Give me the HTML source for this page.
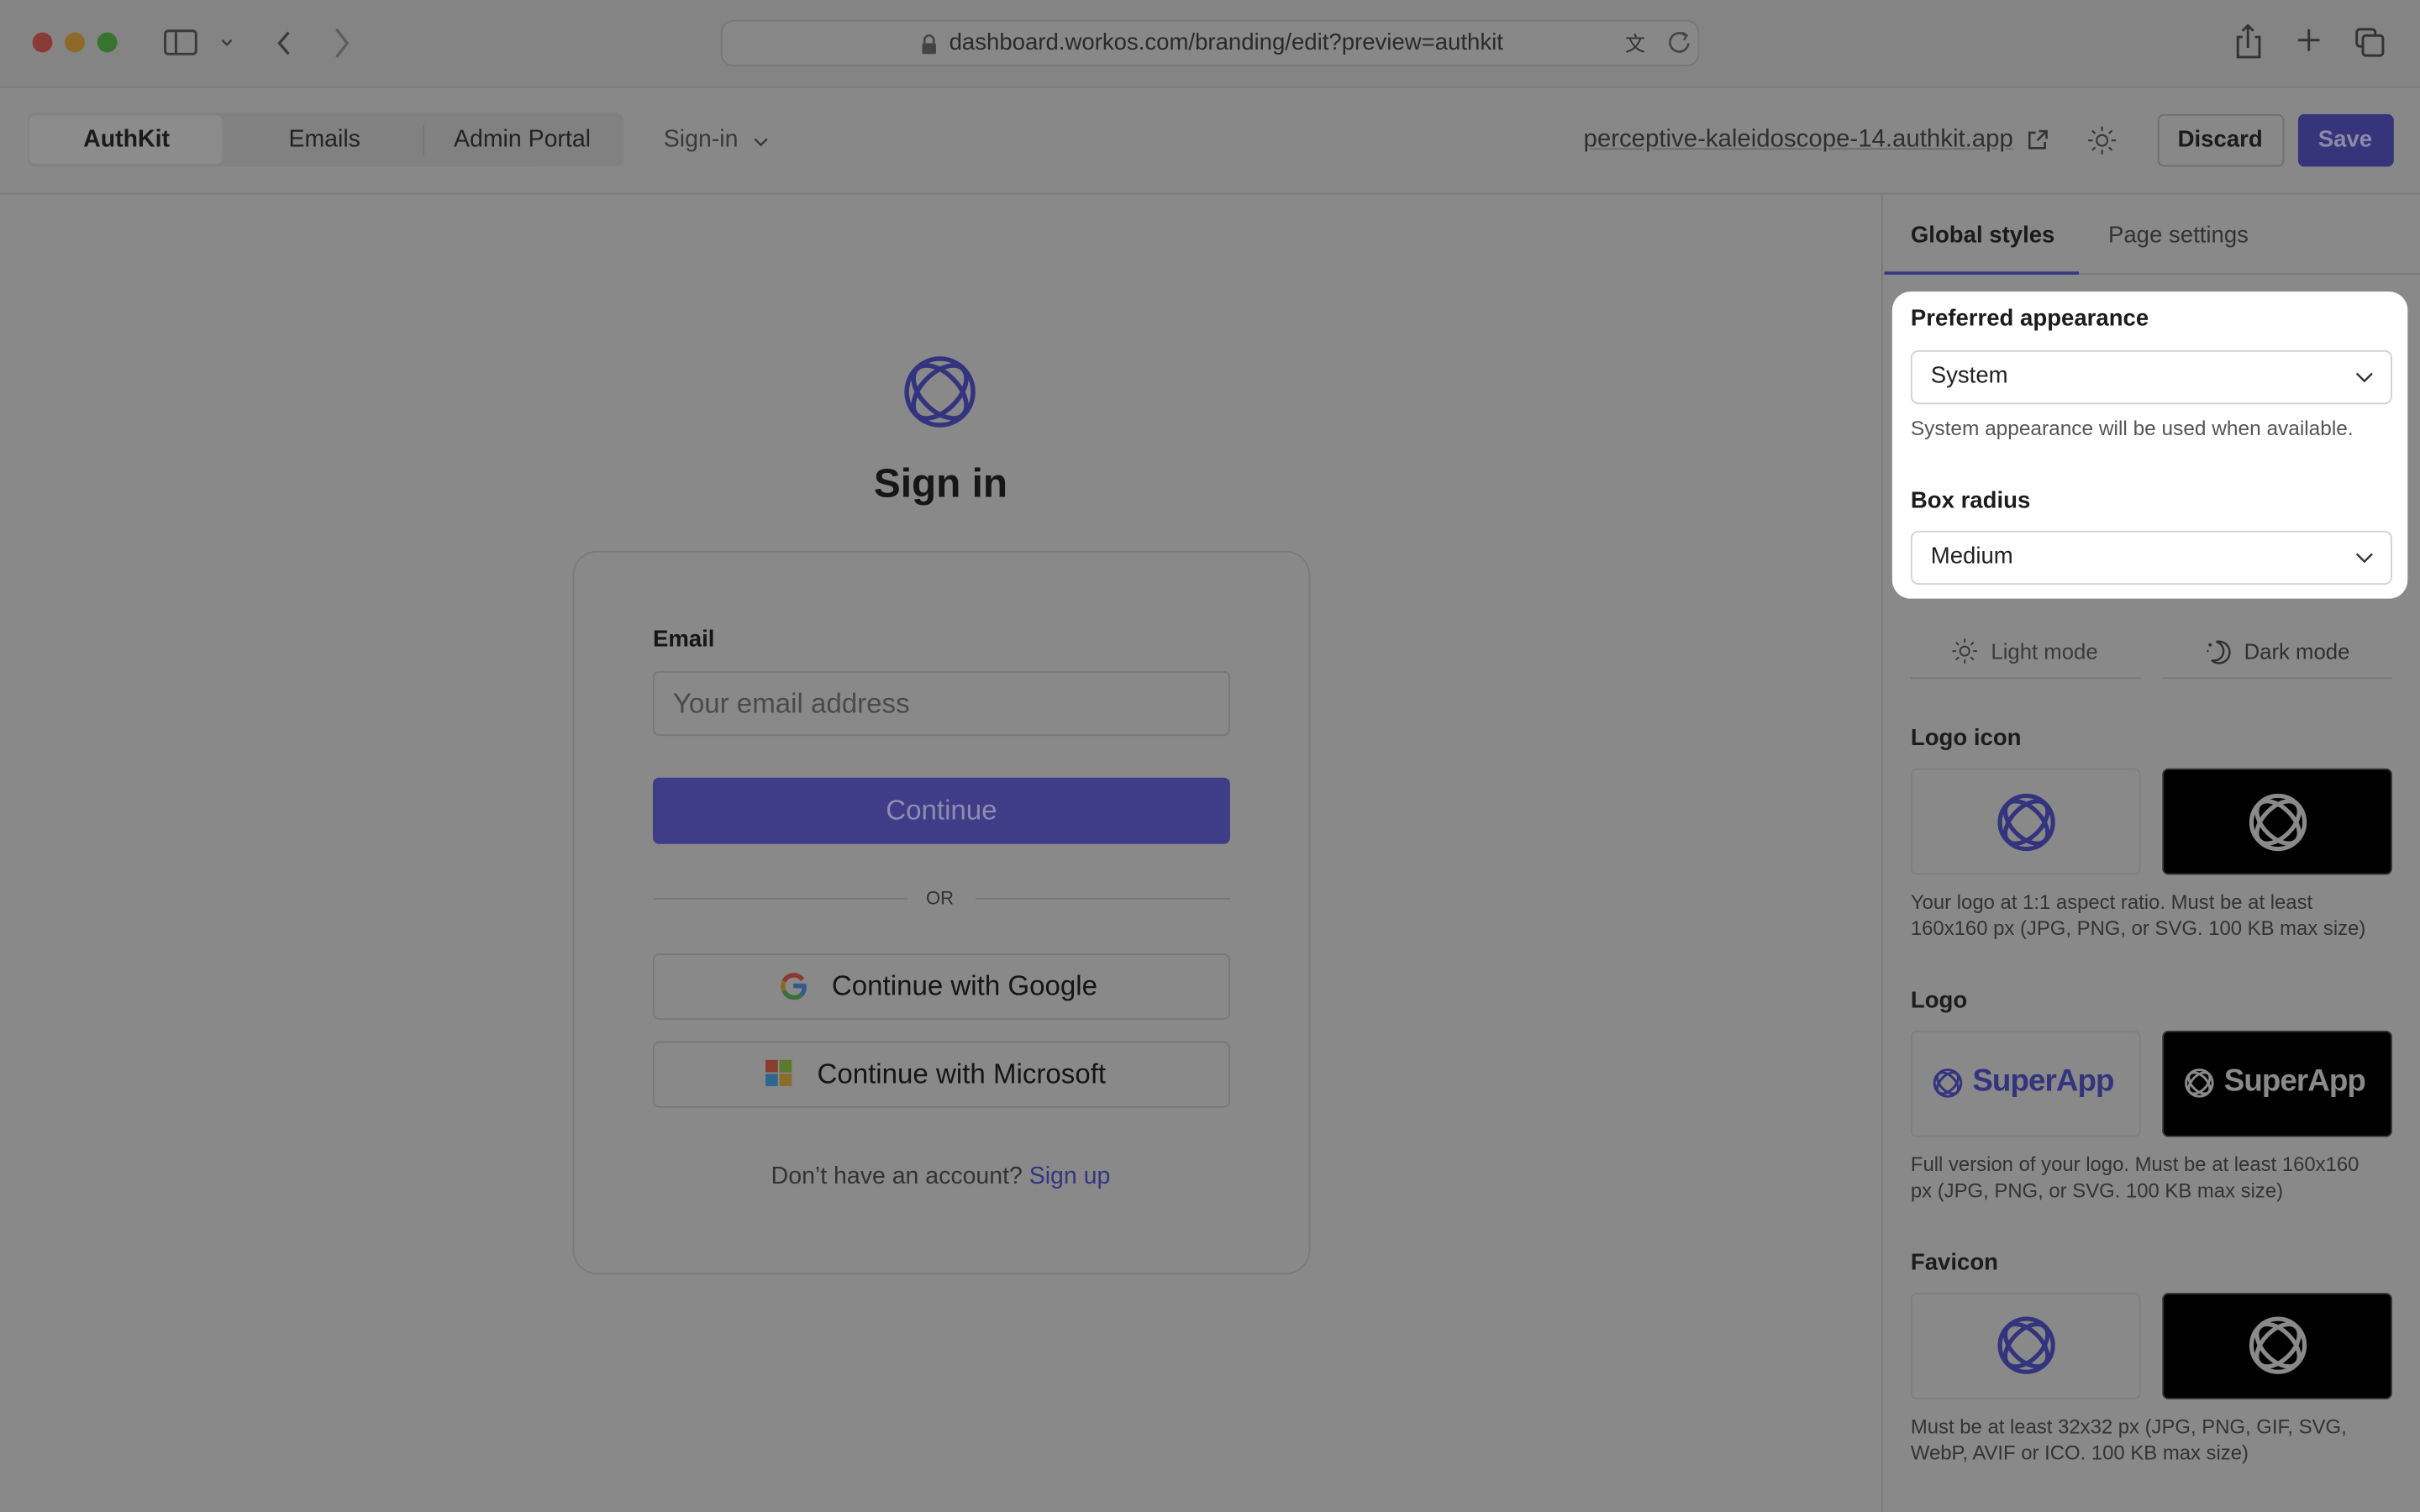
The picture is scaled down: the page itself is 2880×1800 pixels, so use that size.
<!DOCTYPE html>
<html><head><meta charset="utf-8"><style>
*{box-sizing:border-box;margin:0;padding:0}
html,body{width:2880px;height:1800px;overflow:hidden;background:#898989}
#w{position:absolute;left:0;top:0;width:1568px;height:980px;transform:scale(1.836735);transform-origin:0 0;font-family:"Liberation Sans",sans-serif;color:#1d1d1f;background:#898989}
.a{position:absolute}
.t{position:absolute;white-space:nowrap}
.sel{position:absolute;background:#fff;border:1px solid #d0d0d6;border-radius:5px;height:35px;width:312px;left:1238px}
.box{position:absolute;width:149px;height:69px;border-radius:4px}
.lb{border:1px solid #7e7e7e}
.dk{background:#000;border:1px solid #333}
.cap{position:absolute;left:1238px;font-size:13px;color:#333;line-height:17px}
.h{position:absolute;left:1238px;font-size:15px;font-weight:bold;color:#1c1c1c}
.btn{position:absolute;left:423px;width:374px;height:43px;border:1px solid #777;border-radius:4px;font-size:18px;text-align:center;line-height:41px;color:#151515}
</style></head><body><div id="w">
<div class="a" style="left:0;top:0;width:1568px;height:57px;background:#848484;border-bottom:1px solid #797979"></div>
<div class="a" style="left:21px;top:21px;width:13px;height:13px;border-radius:50%;background:#8a3a34"></div>
<div class="a" style="left:42px;top:21px;width:13px;height:13px;border-radius:50%;background:#8d6a2a"></div>
<div class="a" style="left:63px;top:21px;width:13px;height:13px;border-radius:50%;background:#37742f"></div>
<svg class="a" style="left:100px;top:14px" width="110" height="28" viewBox="0 0 110 28" fill="none" stroke="#3a3a3a" stroke-width="1.6"><rect x="7" y="6" width="20" height="15" rx="2"/><path d="M14 6v15"/><path d="M44 12l3 3 3-3" stroke-width="1.3"/><path d="M87 7l-6 7 6 7" stroke-width="1.8"/></svg>
<svg class="a" style="left:214px;top:16px" width="16" height="24"><path d="M4 3l7 9-7 9" fill="none" stroke="#5e5e5e" stroke-width="1.8"/></svg>
<div class="a" style="left:467px;top:13px;width:634px;height:30px;border:1px solid #767676;border-radius:8px;background:#888"></div>
<svg class="a" style="left:596px;top:21px" width="12" height="15"><path d="M3 7V5a3 3 0 016 0v2" fill="none" stroke="#444" stroke-width="1.4"/><rect x="1.5" y="7" width="9" height="7" rx="1" fill="#444"/></svg>
<div class="t" style="left:615px;top:19px;font-size:15px;color:#2a2a2a">dashboard.workos.com/branding/edit?preview=authkit</div>
<div class="t" style="left:1053px;top:18px;font-size:13px;color:#333">文</div>
<svg class="a" style="left:1079px;top:19px" width="18" height="18"><path d="M13 4a6 6 0 1 0 2 5" fill="none" stroke="#444" stroke-width="1.4"/><path d="M11 2l3 2-2 3" fill="none" stroke="#444" stroke-width="1.3"/></svg>
<svg class="a" style="left:1445px;top:15px" width="110" height="26" fill="none" stroke="#333" stroke-width="1.6"><path d="M8 9H5v13h14V9h-3M11.5 16V2M8 5l3.5-3.5L15 5"/><path d="M51 4v14M44 11h14"/><rect x="82" y="4" width="12" height="11" rx="2"/><rect x="86" y="8" width="13" height="13" rx="2" fill="#848484"/></svg>
<div class="a" style="left:0;top:57px;width:1568px;height:69px;background:#888;border-bottom:1px solid #7a7a7a"></div>
<div class="a" style="left:18px;top:73px;width:386px;height:35px;background:#818181;border-radius:5px"></div>
<div class="a" style="left:18px;top:74px;width:127px;height:33px;background:#8c8c8c;border-radius:5px;border:1px solid #838383"></div>
<div class="a" style="left:274px;top:81px;width:1px;height:20px;background:#757575"></div>
<div class="t" style="left:54px;top:82px;font-size:15.5px;font-weight:bold;color:#1a1a1a">AuthKit</div>
<div class="t" style="left:187px;top:82px;font-size:15.5px;color:#222">Emails</div>
<div class="t" style="left:294px;top:82px;font-size:15.5px;color:#222">Admin Portal</div>
<div class="t" style="left:430px;top:82px;font-size:15.5px;color:#3a3a3a">Sign-in</div>
<svg class="a" style="left:487px;top:87px" width="12" height="10"><path d="M2 3l4 4 4-4" fill="none" stroke="#3a3a3a" stroke-width="1.3"/></svg>
<div class="t" style="left:1026px;top:82px;font-size:16px;color:#2f2f2f;text-decoration:underline;text-decoration-color:#6a6a6a">perceptive-kaleidoscope-14.authkit.app</div>
<svg class="a" style="left:1312px;top:83px" width="16" height="16" fill="none" stroke="#333" stroke-width="1.4"><path d="M7 3H3v10h10V9M9 2h5v5M14 2L8 8"/></svg>
<svg class="a" style="left:1352px;top:81px" width="20" height="20" fill="none" stroke="#3a3a3a" stroke-width="1.2"><circle cx="10" cy="10" r="3.5"/><path d="M10 1v3M10 16v3M1 10h3M16 10h3M3.6 3.6l2 2M14.4 14.4l2 2M3.6 16.4l2-2M14.4 5.6l2-2"/></svg>
<div class="a" style="left:1398px;top:74px;width:82px;height:34px;border:1px solid #6f6f6f;border-radius:4px"></div>
<div class="t" style="left:1411px;top:82px;font-size:15px;font-weight:bold;color:#1b1b1b">Discard</div>
<div class="a" style="left:1489px;top:74px;width:62px;height:34px;background:#36347a;border-radius:4px"></div>
<div class="t" style="left:1502px;top:82px;font-size:15px;font-weight:bold;color:#8a8aa8">Save</div>
<svg class="a" style="left:584px;top:229px" width="50" height="50" viewBox="0 0 50 50" fill="none" stroke="#34347e" stroke-width="3"><circle cx="25" cy="25" r="21.5"/><ellipse cx="25" cy="25" rx="21" ry="12" transform="rotate(45 25 25)"/><ellipse cx="25" cy="25" rx="21" ry="12" transform="rotate(-45 25 25)"/></svg>
<div class="t" style="left:0;width:1219px;text-align:center;top:298px;font-size:26px;font-weight:bold;color:#161616">Sign in</div>
<div class="a" style="left:371px;top:357px;width:478px;height:469px;border:1px solid #7a7a7a;border-radius:16px"></div>
<div class="t" style="left:423px;top:406px;font-size:15px;font-weight:bold;color:#161616">Email</div>
<div class="a" style="left:423px;top:435px;width:374px;height:42px;border:1px solid #777;border-radius:4px"></div>
<div class="t" style="left:436px;top:446px;font-size:18px;color:#4a4a4a">Your email address</div>
<div class="a" style="left:423px;top:504px;width:374px;height:43px;background:#3f3d88;border-radius:4px"></div>
<div class="t" style="left:423px;width:374px;text-align:center;top:515px;font-size:18px;color:#8d8cb0">Continue</div>
<div class="a" style="left:423px;top:582px;width:165px;height:1px;background:#777"></div>
<div class="a" style="left:632px;top:582px;width:165px;height:1px;background:#777"></div>
<div class="t" style="left:600px;top:575px;font-size:12px;color:#333">OR</div>
<div class="btn" style="top:618px"><span style="display:inline-block;width:30px"></span>Continue with Google</div>
<svg class="a" style="left:505px;top:630px" width="18" height="18" viewBox="0 0 18 18" fill="none" stroke-width="3"><path d="M15 5A7 7 0 0 0 3 6" stroke="#8a3a32"/><path d="M3 6a7 7 0 0 0 0 6" stroke="#8a6a2a"/><path d="M3 12a7 7 0 0 0 11 3" stroke="#3a6f38"/><path d="M9 9h7a7 7 0 0 1-2 6" stroke="#335a8a"/></svg>
<div class="btn" style="top:675px"><span style="display:inline-block;width:26px"></span>Continue with Microsoft</div>
<div class="a" style="left:496px;top:687px;width:8px;height:8px;background:#8c3c2c"></div>
<div class="a" style="left:505px;top:687px;width:8px;height:8px;background:#5a7a2e"></div>
<div class="a" style="left:496px;top:696px;width:8px;height:8px;background:#2e6690"></div>
<div class="a" style="left:505px;top:696px;width:8px;height:8px;background:#8c6c2a"></div>
<div class="t" style="left:0;width:1219px;text-align:center;top:754px;font-size:15.5px;color:#333">Don’t have an account? <span style="color:#36347f">Sign up</span></div>
<div class="a" style="left:1219px;top:126px;width:1px;height:854px;background:#7a7a7a"></div>
<div class="a" style="left:1220px;top:177px;width:348px;height:1px;background:#7a7a7a"></div>
<div class="a" style="left:1221px;top:176px;width:126px;height:2px;background:#3a3880"></div>
<div class="t" style="left:1238px;top:144px;font-size:15px;font-weight:bold;color:#1b1b1b">Global styles</div>
<div class="t" style="left:1366px;top:144px;font-size:15px;color:#333">Page settings</div>
<div class="a" style="left:1226px;top:189px;width:334px;height:199px;background:#fff;border-radius:12px"></div>
<div class="h" style="top:198px">Preferred appearance</div>
<div class="sel" style="top:227px"></div>
<div class="t" style="left:1251px;top:235px;font-size:15px;color:#222">System</div>
<svg class="a" style="left:1525px;top:239px" width="14" height="12"><path d="M2 3l5 5 5-5" fill="none" stroke="#333" stroke-width="1.3"/></svg>
<div class="t" style="left:1238px;top:270px;font-size:13.3px;color:#555">System appearance will be used when available.</div>
<div class="h" style="top:316px">Box radius</div>
<div class="sel" style="top:344px"></div>
<div class="t" style="left:1251px;top:352px;font-size:15px;color:#222">Medium</div>
<svg class="a" style="left:1525px;top:356px" width="14" height="12"><path d="M2 3l5 5 5-5" fill="none" stroke="#333" stroke-width="1.3"/></svg>
<svg class="a" style="left:1264px;top:413px" width="18" height="18" fill="none" stroke="#3a3a3a" stroke-width="1.1"><circle cx="9" cy="9" r="3"/><path d="M9 1v2.5M9 14.5V17M1 9h2.5M14.5 9H17M3.3 3.3l1.8 1.8M12.9 12.9l1.8 1.8M3.3 14.7l1.8-1.8M12.9 5.1l1.8-1.8"/></svg>
<div class="t" style="left:1290px;top:414px;font-size:14px;color:#3a3a3a">Light mode</div>
<svg class="a" style="left:1428px;top:413px" width="18" height="18" fill="none" stroke="#2f2f2f" stroke-width="1.3"><path d="M8 3a7 7 0 1 1-3 12 6 6 0 0 0 3-12z"/><path d="M3 5h2M4 4v2M2 9h1"/></svg>
<div class="t" style="left:1454px;top:414px;font-size:14px;color:#2f2f2f">Dark mode</div>
<div class="a" style="left:1238px;top:439px;width:149px;height:1px;background:#777"></div>
<div class="a" style="left:1401px;top:439px;width:149px;height:1px;background:#777"></div>
<div class="h" style="top:470px">Logo icon</div>
<div class="box lb" style="left:1238px;top:498px"></div>
<div class="box dk" style="left:1401px;top:498px"></div>
<svg class="a" style="left:1293px;top:513px" width="40" height="40" viewBox="0 0 50 50" fill="none" stroke="#34347e" stroke-width="3.5"><circle cx="25" cy="25" r="21.5"/><ellipse cx="25" cy="25" rx="21" ry="12" transform="rotate(45 25 25)"/><ellipse cx="25" cy="25" rx="21" ry="12" transform="rotate(-45 25 25)"/></svg>
<svg class="a" style="left:1456px;top:513px" width="40" height="40" viewBox="0 0 50 50" fill="none" stroke="#8a8a8a" stroke-width="3.5"><circle cx="25" cy="25" r="21.5"/><ellipse cx="25" cy="25" rx="21" ry="12" transform="rotate(45 25 25)"/><ellipse cx="25" cy="25" rx="21" ry="12" transform="rotate(-45 25 25)"/></svg>
<div class="cap" style="top:576px">Your logo at 1:1 aspect ratio. Must be at least<br>160x160 px (JPG, PNG, or SVG. 100 KB max size)</div>
<div class="h" style="top:640px">Logo</div>
<div class="box lb" style="left:1238px;top:668px"></div>
<div class="box dk" style="left:1401px;top:668px"></div>
<svg class="a" style="left:1252px;top:692px" width="20" height="20" viewBox="0 0 50 50" fill="none" stroke="#34347e" stroke-width="4"><circle cx="25" cy="25" r="21.5"/><ellipse cx="25" cy="25" rx="21" ry="12" transform="rotate(45 25 25)"/><ellipse cx="25" cy="25" rx="21" ry="12" transform="rotate(-45 25 25)"/></svg>
<div class="t" style="left:1278px;top:690px;font-size:20px;font-weight:bold;color:#34347e;letter-spacing:-0.5px">SuperApp</div>
<svg class="a" style="left:1415px;top:692px" width="20" height="20" viewBox="0 0 50 50" fill="none" stroke="#8a8a8a" stroke-width="4"><circle cx="25" cy="25" r="21.5"/><ellipse cx="25" cy="25" rx="21" ry="12" transform="rotate(45 25 25)"/><ellipse cx="25" cy="25" rx="21" ry="12" transform="rotate(-45 25 25)"/></svg>
<div class="t" style="left:1441px;top:690px;font-size:20px;font-weight:bold;color:#8a8a8a;letter-spacing:-0.5px">SuperApp</div>
<div class="cap" style="top:746px">Full version of your logo. Must be at least 160x160<br>px (JPG, PNG, or SVG. 100 KB max size)</div>
<div class="h" style="top:810px">Favicon</div>
<div class="box lb" style="left:1238px;top:838px"></div>
<div class="box dk" style="left:1401px;top:838px"></div>
<svg class="a" style="left:1293px;top:852px" width="40" height="40" viewBox="0 0 50 50" fill="none" stroke="#34347e" stroke-width="3.5"><circle cx="25" cy="25" r="21.5"/><ellipse cx="25" cy="25" rx="21" ry="12" transform="rotate(45 25 25)"/><ellipse cx="25" cy="25" rx="21" ry="12" transform="rotate(-45 25 25)"/></svg>
<svg class="a" style="left:1456px;top:852px" width="40" height="40" viewBox="0 0 50 50" fill="none" stroke="#8a8a8a" stroke-width="3.5"><circle cx="25" cy="25" r="21.5"/><ellipse cx="25" cy="25" rx="21" ry="12" transform="rotate(45 25 25)"/><ellipse cx="25" cy="25" rx="21" ry="12" transform="rotate(-45 25 25)"/></svg>
<div class="cap" style="top:916px">Must be at least 32x32 px (JPG, PNG, GIF, SVG,<br>WebP, AVIF or ICO. 100 KB max size)</div>
</div></body></html>
